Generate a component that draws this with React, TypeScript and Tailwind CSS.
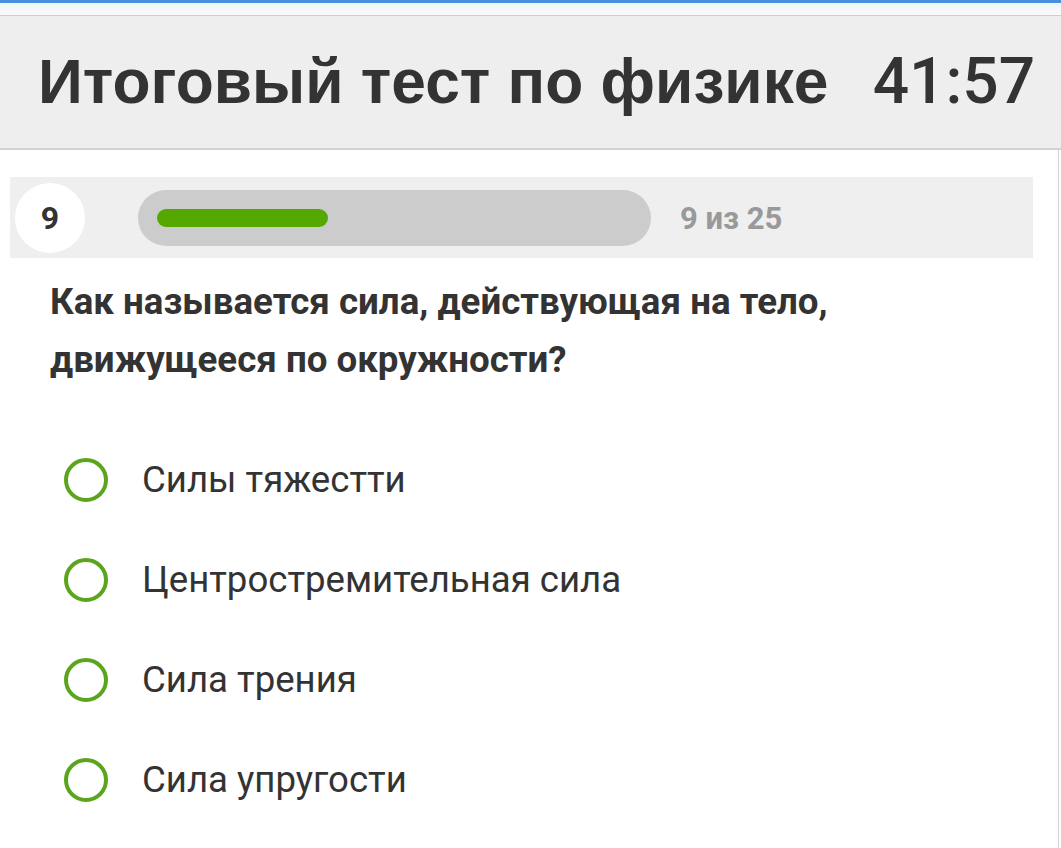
import React from "react";

const options = [
  "Силы тяжестти",
  "Центростремительная сила",
  "Сила трения",
  "Сила упругости",
];

export default function App() {
  return (
    <div className="w-[1061px] h-[848px] bg-white overflow-hidden relative" style={{ fontFamily: "Roboto, 'Liberation Sans', sans-serif" }}>
      <div className="h-[3px] bg-[#4a8fdc]" />
      <div className="h-[13px] bg-gradient-to-b from-[#f1f5f9] to-[#fafafa] border-b border-[#cfcfcf]" />
      <div className="h-[134px] bg-[#eeeeee] border-b-2 border-[#d2d2d2] flex items-center pl-[38px] pr-[26px]">
        <div className="text-[#333333] text-[62.3px] font-bold leading-none" style={{ fontFamily: "'Liberation Sans', Arial, sans-serif" }}>
          Итоговый тест по физике
        </div>
        <div className="ml-auto text-[#333333] text-[64px] font-medium leading-none" style={{ fontFamily: "Roboto, sans-serif" }}>
          41:57
        </div>
      </div>
      <div className="border-r border-[#d6d6d6] w-[1059px] h-[700px] pt-[27px]">
        <div className="ml-[10px] w-[1023px] h-[81px] bg-[#efefef] flex items-center pl-[5px]">
          <div className="w-[70px] h-[70px] rounded-full bg-white flex items-center justify-center text-[#333] text-[32px] font-bold">
            9
          </div>
          <div className="ml-[53px] w-[513px] h-[56px] rounded-full bg-[#cccccc] flex items-center pl-[19px]">
            <div className="w-[171px] h-[18px] rounded-full bg-[#55a800]" />
          </div>
          <div className="ml-[29px] pt-[3px] text-[#999999] text-[31px] font-bold">9 из 25</div>
        </div>
        <div className="pl-[50px] pt-[15px] text-[#333333] text-[36.7px] font-bold leading-[58px]">
          Как называется сила, действующая на тело,<br />движущееся по окружности?
        </div>
        <div className="pl-[64px] pt-[69px] flex flex-col gap-[56px]">
          {options.map((o) => (
            <div key={o} className="flex items-center h-[44px]">
              <div className="w-[44px] h-[44px] rounded-full border-4 border-[#5aa51c] bg-white shrink-0" />
              <div className="ml-[34px] text-[#333333] text-[36.6px] leading-none">{o}</div>
            </div>
          ))}
        </div>
      </div>
    </div>
  );
}
